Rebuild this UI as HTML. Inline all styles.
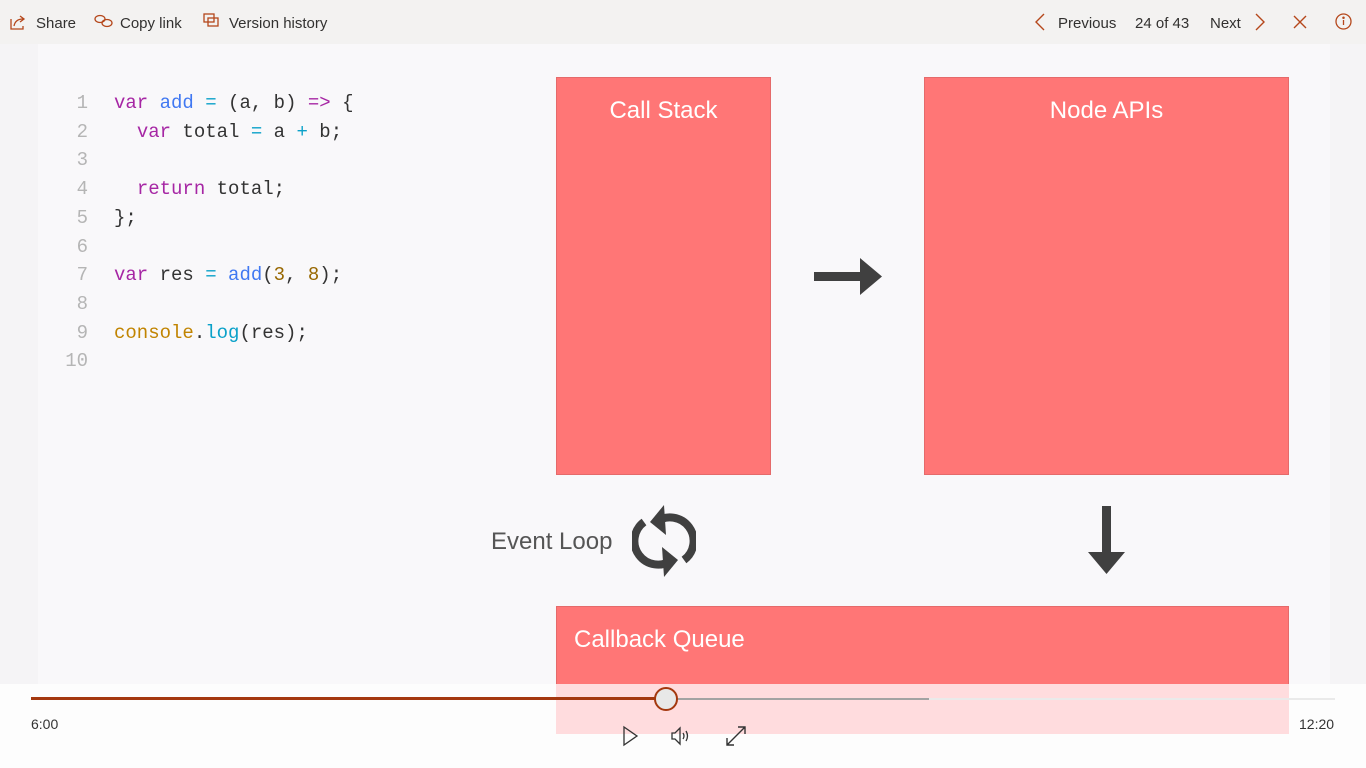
<!DOCTYPE html>
<html><head><meta charset="utf-8"><style>
*{margin:0;padding:0;box-sizing:border-box}
body{width:1366px;height:768px;overflow:hidden;background:#f5f4f6;font-family:"Liberation Sans",sans-serif;position:relative}
.top{position:absolute;left:0;top:0;width:1366px;height:44px;background:#f3f2f1;color:#323130;font-size:15px}
.top span{position:absolute;top:15px}
.slide{position:absolute;left:38px;top:44px;width:1292px;height:640px;background:#f9f8fa}
.code{position:absolute;left:0;top:89px;font-family:"Liberation Mono",monospace;font-size:19px;line-height:28.7px;color:#333}
.ln{position:absolute;left:62px;width:26px;text-align:right;color:#b5b5b5}
.cl{position:absolute;left:114px;white-space:pre}
.k{color:#a626a4}.f{color:#4078f2}.o{color:#0aa1c9}.n{color:#986801}.c{color:#c18401}
.box{position:absolute;background:#ff7676;border:1px solid #e56a6a;color:#fff;font-size:24px}
.bottom{position:absolute;left:0;top:684px;width:1366px;height:84px;background:#fdfdfd}
</style></head><body>
<div class="top">
<svg style="position:absolute;left:9px;top:13px" width="18" height="18" viewBox="0 0 18 18" fill="none" stroke="#b5471b" stroke-width="1.3"><path d="M2 6v10h12v-3"/><path d="M5 13c1-5 4-7 9-7"/><path d="M11 3l4 3-4 3"/></svg>
<span style="left:36px">Share</span>
<svg style="position:absolute;left:94px;top:14px" width="20" height="14" viewBox="0 0 20 14" fill="none" stroke="#b5471b" stroke-width="1.3"><ellipse cx="6" cy="5" rx="5" ry="3.5"/><ellipse cx="13" cy="9" rx="5" ry="3.5"/></svg>
<span style="left:120px">Copy link</span>
<svg style="position:absolute;left:203px;top:13px" width="18" height="16" viewBox="0 0 18 16" fill="none" stroke="#b5471b" stroke-width="1.3"><rect x="1" y="1" width="10" height="8"/><rect x="5" y="5" width="10" height="8"/></svg>
<span style="left:229px">Version history</span>
<svg style="position:absolute;left:1034px;top:13px" width="12" height="18" viewBox="0 0 12 18" fill="none" stroke="#b5471b" stroke-width="1.4"><path d="M10 1L2 9l8 8"/></svg>
<span style="left:1058px">Previous</span>
<span style="left:1135px">24 of 43</span>
<span style="left:1210px">Next</span>
<svg style="position:absolute;left:1254px;top:13px" width="12" height="18" viewBox="0 0 12 18" fill="none" stroke="#b5471b" stroke-width="1.4"><path d="M2 1l8 8-8 8"/></svg>
<svg style="position:absolute;left:1293px;top:15px" width="14" height="14" viewBox="0 0 14 14" stroke="#b5471b" stroke-width="1.4"><path d="M1 1l12 12M13 1L1 13"/></svg>
<svg style="position:absolute;left:1335px;top:13px" width="17" height="17" viewBox="0 0 17 17" fill="none" stroke="#b5471b" stroke-width="1.3"><circle cx="8.5" cy="8.5" r="7.5"/><path d="M8.5 7v5"/><circle cx="8.5" cy="4.8" r=".6" fill="#b5471b"/></svg>
</div>
<div class="slide"></div>
<div class="code">
<div class="ln" style="top:0">1</div><div class="cl" style="top:0"><span class="k">var</span> <span class="f">add</span> <span class="o">=</span> (a, b) <span class="k">=&gt;</span> {</div>
<div class="ln" style="top:28.7px">2</div><div class="cl" style="top:28.7px">  <span class="k">var</span> total <span class="o">=</span> a <span class="o">+</span> b;</div>
<div class="ln" style="top:57.4px">3</div>
<div class="ln" style="top:86.1px">4</div><div class="cl" style="top:86.1px">  <span class="k">return</span> total;</div>
<div class="ln" style="top:114.8px">5</div><div class="cl" style="top:114.8px">};</div>
<div class="ln" style="top:143.5px">6</div>
<div class="ln" style="top:172.2px">7</div><div class="cl" style="top:172.2px"><span class="k">var</span> res <span class="o">=</span> <span class="f">add</span>(<span class="n">3</span>, <span class="n">8</span>);</div>
<div class="ln" style="top:200.9px">8</div>
<div class="ln" style="top:229.6px">9</div><div class="cl" style="top:229.6px"><span class="c">console</span>.<span class="o">log</span>(res);</div>
<div class="ln" style="top:258.3px">10</div>
</div>
<div class="box" style="left:556px;top:77px;width:215px;height:398px"><div style="text-align:center;margin-top:19px">Call Stack</div></div>
<div class="box" style="left:924px;top:77px;width:365px;height:398px"><div style="text-align:center;margin-top:19px">Node APIs</div></div>
<svg style="position:absolute;left:814px;top:258px" width="68" height="38" viewBox="0 0 68 38" fill="#404040"><rect x="0" y="14" width="48" height="9"/><path d="M46 0l22 18.5L46 37z"/></svg>
<svg style="position:absolute;left:1088px;top:506px" width="38" height="68" viewBox="0 0 38 68" fill="#404040"><rect x="14" y="0" width="9" height="48"/><path d="M0 46l18.5 22L37 46z"/></svg>
<div style="position:absolute;left:491px;top:528px;font-size:24px;color:#555">Event Loop</div>
<svg style="position:absolute;left:632px;top:503px" width="64" height="76" viewBox="0 0 64 76" fill="none"><path d="M24 19A20 20 0 0 1 52 57" stroke="#404040" stroke-width="8"/><path d="M40 57A20 20 0 0 1 12 19" stroke="#404040" stroke-width="8"/><path d="M18 19L32 2 34 32z" fill="#404040"/><path d="M46 57L32 74 30 44z" fill="#404040"/></svg>
<div class="box" style="left:556px;top:606px;width:733px;height:100px;border-bottom:none"><div style="margin:19px 0 0 17px">Callback Queue</div></div>
<div class="bottom"></div>
<div style="position:absolute;left:556px;top:684px;width:733px;height:50px;background:#ffdcde"></div>
<div style="position:absolute;left:31px;top:698px;width:1304px;height:2px;background:#eaeaea"></div>
<div style="position:absolute;left:31px;top:698px;width:898px;height:2px;background:#a3a3a3"></div>
<div style="position:absolute;left:31px;top:697px;width:635px;height:3px;background:#a4380f"></div>
<div style="position:absolute;left:654px;top:687px;width:24px;height:24px;border-radius:50%;background:#e8e8e8;border:2px solid #a4380f"></div>
<div style="position:absolute;left:31px;top:716px;font-size:14px;color:#333">6:00</div>
<div style="position:absolute;left:1299px;top:716px;font-size:14px;color:#333">12:20</div>
<svg style="position:absolute;left:622px;top:725px" width="18" height="22" viewBox="0 0 18 22" fill="none" stroke="#333" stroke-width="1.3"><path d="M2 2l13 9-13 9z"/></svg>
<svg style="position:absolute;left:670px;top:726px" width="22" height="20" viewBox="0 0 22 20" fill="none" stroke="#333" stroke-width="1.3"><path d="M2 7h3l5-5v16l-5-5H2z"/><path d="M13 7q2 3 0 6M16 5q3 5 0 10"/></svg>
<svg style="position:absolute;left:724px;top:724px" width="24" height="24" viewBox="0 0 24 24" fill="none" stroke="#333" stroke-width="1.4"><path d="M3 21L21 3M14 3h7v7M3 14v7h7"/></svg>
</body></html>
